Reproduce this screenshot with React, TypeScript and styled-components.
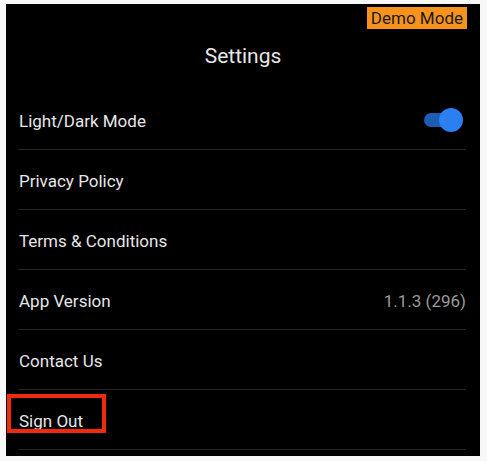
import styled, { createGlobalStyle } from "styled-components";

const GlobalStyle = createGlobalStyle`
    body {
        margin: 0;
        background: #f8f8f8;
        font-family: Roboto, "Liberation Sans", sans-serif;
    }
`;

const Screen = styled.main`
    position: relative;
    box-sizing: border-box;
    width: 474px;
    height: 452px;
    margin: 4px 0 0 6px;
    background: #000;
    display: flex;
    flex-direction: column;
`;

const DemoBadge = styled.div`
    position: absolute;
    top: 3px;
    right: 13px;
    background: #f7931d;
    color: #1a1a1a;
    font-size: 17px;
    line-height: 22px;
    padding: 0 4px;
`;

const Header = styled.header`
    box-sizing: border-box;
    height: 86px;
    padding-top: 40px;
    text-align: center;
    color: #e6e6e6;
    font-size: 21px;
    line-height: 25px;
`;

const List = styled.ul`
    list-style: none;
    margin: 0;
    padding: 0 14px 0 12px;
`;

const Row = styled.li`
    display: flex;
    align-items: center;
    justify-content: space-between;
    box-sizing: border-box;
    height: 60px;
    padding: 3px 0 0 1px;
    border-bottom: 1px solid #262626;
    color: #e6e6e6;
    font-size: 17px;
    line-height: 20px;
`;

const Value = styled.span`
    color: #9a9a9a;
`;

const Highlighted = styled.span<{ $on?: boolean }>`
    position: relative;
    &::after {
        content: "";
        display: ${p => (p.$on ? "block" : "none")};
        position: absolute;
        left: -12px;
        right: -23px;
        top: -17px;
        bottom: -2px;
        border: 4px solid #f2290d;
    }
`;

const Track = styled.div<{ $on: boolean }>`
    position: relative;
    width: 34px;
    height: 14px;
    margin: 0 8px 2px 0;
    border-radius: 7px;
    background: ${p => (p.$on ? "#1c5cb3" : "#555")};
`;

const Thumb = styled.div<{ $on: boolean }>`
    position: absolute;
    top: -5px;
    ${p => (p.$on ? "right: -5px;" : "left: -5px;")}
    width: 24px;
    height: 24px;
    border-radius: 50%;
    background: ${p => (p.$on ? "#2c7ff0" : "#ccc")};
`;

const items: { label: string; value?: string; toggle?: boolean; highlight?: boolean }[] = [
    { label: "Light/Dark Mode", toggle: true },
    { label: "Privacy Policy" },
    { label: "Terms & Conditions" },
    { label: "App Version", value: "1.1.3 (296)" },
    { label: "Contact Us" },
    { label: "Sign Out", highlight: true },
];

export default function App() {
    return <>
        <GlobalStyle />
        <Screen>
            <DemoBadge>Demo Mode</DemoBadge>
            <Header>Settings</Header>
            <List>
                {items.map(item => (
                    <Row key={item.label}>
                        <Highlighted $on={item.highlight}>{item.label}</Highlighted>
                        {item.value && <Value>{item.value}</Value>}
                        {item.toggle && <Track $on><Thumb $on /></Track>}
                    </Row>
                ))}
            </List>
        </Screen>
    </>;
}
